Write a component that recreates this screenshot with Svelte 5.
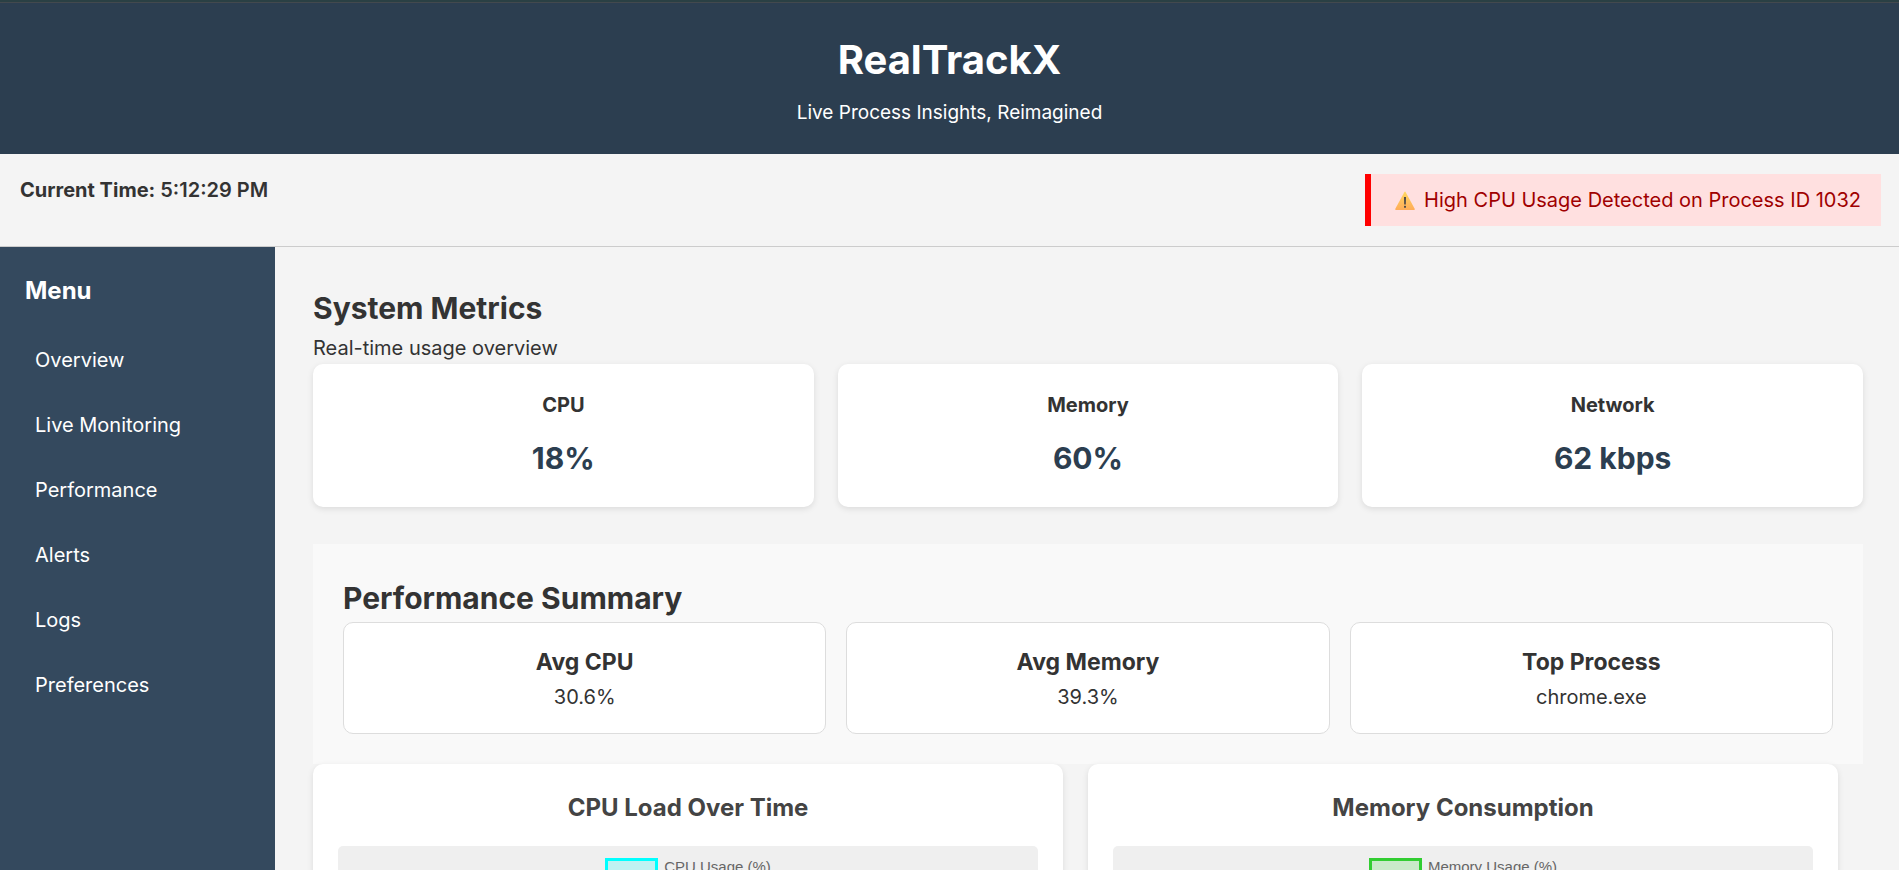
<script>
  const menu = ['Overview', 'Live Monitoring', 'Performance', 'Alerts', 'Logs', 'Preferences'];
  const metrics = [
    { name: 'CPU', value: '18%' },
    { name: 'Memory', value: '60%' },
    { name: 'Network', value: '62 kbps' }
  ];
  const summary = [
    { name: 'Avg CPU', value: '30.6%' },
    { name: 'Avg Memory', value: '39.3%' },
    { name: 'Top Process', value: 'chrome.exe' }
  ];
  const charts = [
    { title: 'CPU Load Over Time', legend: 'CPU Usage (%)', kind: 'cpu' },
    { title: 'Memory Consumption', legend: 'Memory Usage (%)', kind: 'memory' }
  ];
</script>

<div class="page">
  <header>
    <h1>RealTrackX</h1>
    <p>Live Process Insights, Reimagined</p>
  </header>

  <div class="status">
    <div class="clock"><strong>Current Time:</strong> 5:12:29 PM</div>
    <div class="alert" role="alert">
      <svg viewBox="0 0 20 20" width="20" height="20" aria-hidden="true">
        <defs>
          <linearGradient id="warn" x1="0" y1="0" x2="0" y2="1">
            <stop offset="0" stop-color="#ffd760" />
            <stop offset="1" stop-color="#ffac58" />
          </linearGradient>
        </defs>
        <path d="M9.300 2.200Q10 1 10.700 2.200L19.800 19Q20 20 19 20H1Q0 20 .2 19Z" fill="url(#warn)" />
        <path d="M9 7h2l-.2 7.500H9.200Z" fill="#4f4a48" />
        <rect x="9" y="15.800" width="2" height="2" rx=".6" fill="#4f4a48" />
      </svg>
      <span>High CPU Usage Detected on Process ID 1032</span>
    </div>
  </div>

  <div class="body">
    <nav>
      <h2>Menu</h2>
      <ul>
        {#each menu as item}
          <li><a href="#{item.toLowerCase().replace(' ', '-')}">{item}</a></li>
        {/each}
      </ul>
    </nav>

    <main>
      <section class="metrics">
        <h2>System Metrics</h2>
        <p>Real-time usage overview</p>
        <div class="cards">
          {#each metrics as m}
            <div class="card metric">
              <h3>{m.name}</h3>
              <div class="value">{m.value}</div>
            </div>
          {/each}
        </div>
      </section>

      <section class="summary">
        <h2>Performance Summary</h2>
        <div class="boxes">
          {#each summary as s}
            <div class="box">
              <h3>{s.name}</h3>
              <p>{s.value}</p>
            </div>
          {/each}
        </div>
      </section>

      <section class="charts">
        {#each charts as c}
          <div class="card chart">
            <h3>{c.title}</h3>
            <div class="plot">
              <div class="legend"><span class="swatch {c.kind}"></span>{c.legend}</div>
            </div>
          </div>
        {/each}
      </section>
    </main>
  </div>
</div>

<style>
  :global(body) {
    overflow: hidden;
    background: #f4f4f4;
  }
  .page {
    display: flex;
    flex-direction: column;
    height: 100vh;
    overflow: hidden;
    color: #333;
    font: 20px/32px Inter, sans-serif;
  }
  h1,
  h2,
  h3,
  p,
  ul {
    margin: 0;
    padding: 0;
  }
  header {
    flex: none;
    padding: 28px 20px 26px;
    border-top: 2px solid #2a4044;
    background: #2c3e50;
    box-shadow: inset 0 1px #43494e;
    color: #fff;
    text-align: center;
  }
  h1 {
    font-size: 40px;
    line-height: 60px;
  }
  header p {
    margin-top: 8px;
    font-size: 19px;
    line-height: 30px;
  }
  .status {
    display: flex;
    flex: none;
    align-items: flex-start;
    justify-content: space-between;
    padding: 20px 18px 20px 20px;
    border-bottom: 1px solid #ccc;
  }
  .clock {
    font-weight: 600;
  }
  .clock strong {
    font-weight: 700;
  }
  .alert {
    display: flex;
    align-items: center;
    gap: 9px;
    padding: 10px 20px 10px 24px;
    border-left: 6px solid #f00;
    background: #ffe0e0;
    color: #a00000;
  }
  .body {
    display: flex;
    flex: 1;
    min-height: 0;
  }
  nav {
    flex: none;
    box-sizing: border-box;
    width: 275px;
    padding: 25px;
    background: #34495e;
    color: #fff;
  }
  nav h2 {
    font-size: 24px;
    line-height: 38px;
  }
  nav ul {
    margin-top: 24px;
    list-style: none;
  }
  nav li {
    margin-bottom: 13px;
  }
  nav a {
    display: block;
    padding: 10px;
    color: #fff;
    text-decoration: none;
  }
  main {
    flex: 1;
    min-width: 0;
    padding: 37px 36px 0 38px;
  }
  main h2 {
    font-size: 30px;
    line-height: 48px;
  }
  .cards {
    display: grid;
    grid-template-columns: repeat(3, 1fr);
    gap: 24px;
  }
  .card {
    border-radius: 10px;
    background: #fff;
    box-shadow: 0 2px 6px rgba(0, 0, 0, 0.1);
    text-align: center;
  }
  .metric {
    padding: 25px;
  }
  .metric h3 {
    font-size: 20px;
    line-height: 32px;
  }
  .value {
    margin-top: 13px;
    color: #2c3e50;
    font-size: 30px;
    font-weight: 700;
    line-height: 48px;
  }
  .summary {
    margin-top: 37px;
    padding: 30px;
    background: #f9f9f9;
  }
  .boxes {
    display: grid;
    grid-template-columns: repeat(3, 1fr);
    gap: 20px;
  }
  .box {
    padding: 20px;
    border: 1px solid #ddd;
    border-radius: 10px;
    background: #fff;
    text-align: center;
  }
  .box h3 {
    font-size: 23px;
    line-height: 38px;
  }
  .charts {
    display: grid;
    grid-template-columns: repeat(2, 1fr);
    gap: 25px;
    padding-right: 25px;
  }
  .chart {
    padding: 25px;
  }
  .chart h3 {
    color: #444;
    font-size: 24px;
    line-height: 37px;
  }
  .plot {
    display: flex;
    justify-content: center;
    height: 350px;
    margin-top: 20px;
    padding-top: 12px;
    border-radius: 5px;
    background: #efefef;
  }
  .legend {
    display: flex;
    align-items: flex-start;
    gap: 6px;
    height: 18px;
    color: #666;
    font: 15px/18px "Liberation Sans", Arial, sans-serif;
  }
  .swatch {
    box-sizing: border-box;
    width: 53px;
    height: 18px;
    border: 3px solid;
  }
  .cpu {
    border-color: #0ff;
    background: #bff2f2;
  }
  .memory {
    border-color: #32cd32;
    background: #c9eac9;
  }
</style>
